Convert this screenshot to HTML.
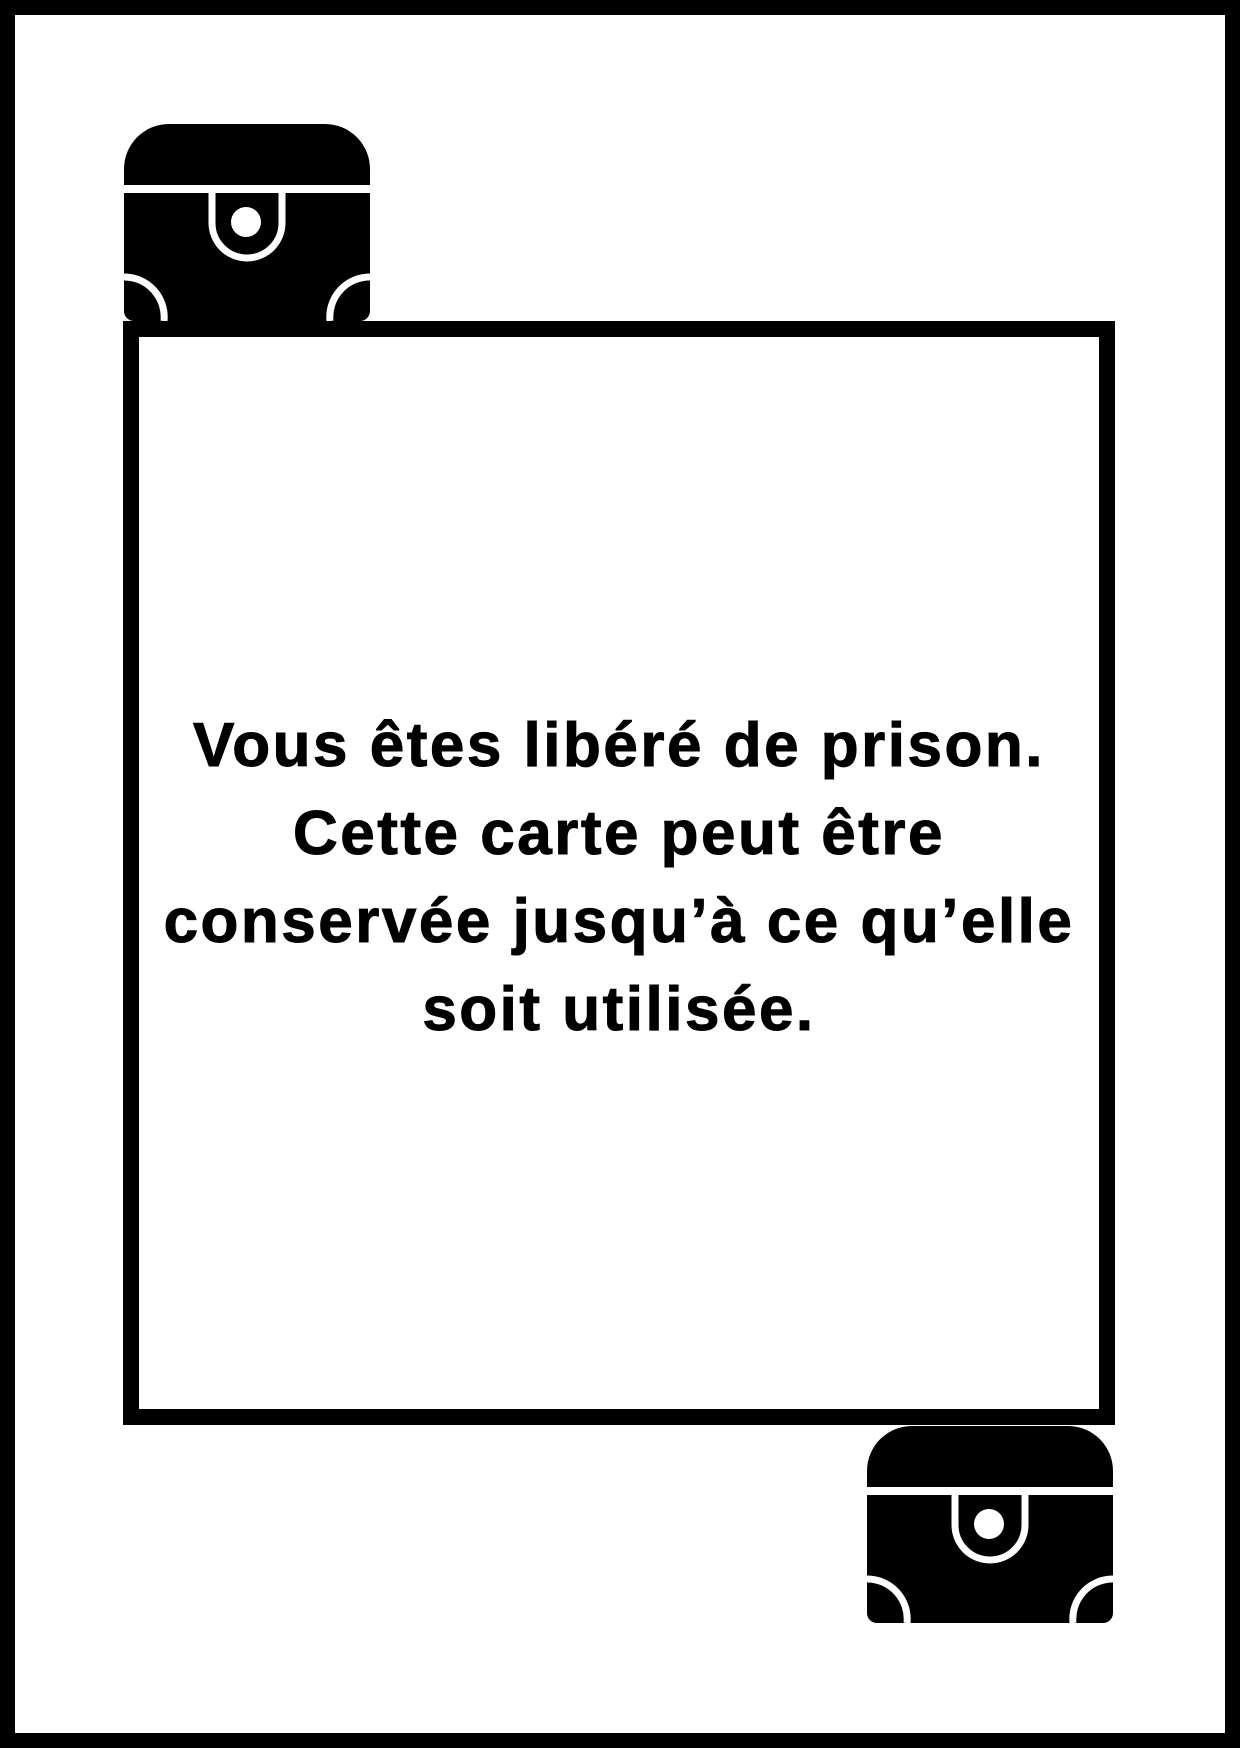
<!DOCTYPE html>
<html><head><meta charset="utf-8"><style>
html,body{margin:0;padding:0;background:#fff}
body{width:1240px;height:1748px;position:relative;overflow:hidden}
.outer{position:absolute;left:0;top:0;width:1240px;height:1748px;box-sizing:border-box;border:15px solid #000}
.frame{position:absolute;left:123px;top:321px;width:992px;height:1104px;box-sizing:border-box;border:16px solid #000}
.txt{position:absolute;left:123px;width:992px;top:702px;text-align:center;font-family:"Liberation Sans",sans-serif;font-weight:bold;font-size:62px;letter-spacing:2.5px;-webkit-text-stroke:1px #000;line-height:88px;color:#000}
svg{position:absolute}
</style></head><body>
<div class="outer"></div>
<div class="frame"></div>
<svg style="left:124px;top:124px" width="246" height="197" viewBox="0 0 246 197">
<path d="M0 61 V45 A45 45 0 0 1 45 0 H201 A45 45 0 0 1 246 45 V61 Z" fill="#000"/>
<path d="M0 69 H246 V187 A10 10 0 0 1 236 197 H10 A10 10 0 0 1 0 187 Z" fill="#000"/>
<path d="M88 69 V99 A35 35 0 0 0 158 99 V69" fill="none" stroke="#fff" stroke-width="7"/>
<circle cx="122" cy="98" r="15" fill="#fff"/>
<path d="M0 153 A40 40 0 0 1 40 197" fill="none" stroke="#fff" stroke-width="7"/>
<path d="M246 153 A40 40 0 0 0 206 197" fill="none" stroke="#fff" stroke-width="7"/>
</svg>
<svg style="left:867px;top:1426px" width="246" height="197" viewBox="0 0 246 197">
<path d="M0 61 V45 A45 45 0 0 1 45 0 H201 A45 45 0 0 1 246 45 V61 Z" fill="#000"/>
<path d="M0 69 H246 V187 A10 10 0 0 1 236 197 H10 A10 10 0 0 1 0 187 Z" fill="#000"/>
<path d="M88 69 V99 A35 35 0 0 0 158 99 V69" fill="none" stroke="#fff" stroke-width="7"/>
<circle cx="122" cy="98" r="15" fill="#fff"/>
<path d="M0 153 A40 40 0 0 1 40 197" fill="none" stroke="#fff" stroke-width="7"/>
<path d="M246 153 A40 40 0 0 0 206 197" fill="none" stroke="#fff" stroke-width="7"/>
</svg>
<div class="txt">Vous êtes libéré de prison.<br>Cette carte peut être<br>conservée jusqu’à ce qu’elle<br>soit utilisée.</div>
</body></html>
